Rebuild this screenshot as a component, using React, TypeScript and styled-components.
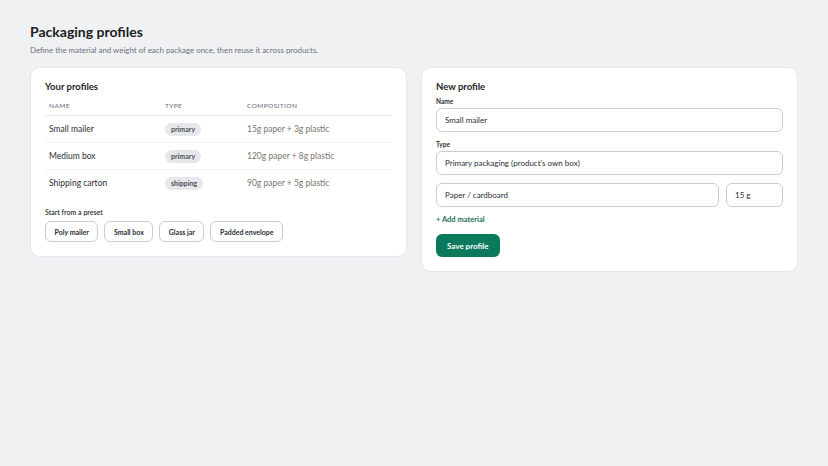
import React from 'react';
import styled, { createGlobalStyle } from 'styled-components';

const GlobalStyle = createGlobalStyle`
    body {
        margin: 0;
        background: #f0f1f3;
        font-family: Lato, 'Open Sans', sans-serif;
        color: #1f2328;
    }
`;

const Page = styled.div`
    padding: 22px 30px 30px;
    min-height: 466px;
    box-sizing: border-box;
`;

const Title = styled.h1`
    margin: 0;
    font-size: 14px;
    line-height: 20px;
    font-weight: 700;
    color: #1a1d21;
`;

const Subtitle = styled.p`
    margin: 2px 0 0;
    font-size: 7.9px;
    line-height: 12px;
    color: #6b7280;
`;

const Columns = styled.div`
    margin-top: 11px;
    display: grid;
    grid-template-columns: 1fr 1fr;
    gap: 14px;
    align-items: start;
`;

const Card = styled.section`
    background: #fff;
    border: 1px solid #e6e7ea;
    border-radius: 10px;
    padding: 13px 14px 14px;
`;

const CardTitle = styled.h2`
    margin: 0;
    font-size: 9.5px;
    line-height: 12px;
    font-weight: 700;
    color: #1f2328;
`;

const Table = styled.table`
    width: 100%;
    margin-top: 2px;
    border-collapse: collapse;
    table-layout: fixed;
`;

const Th = styled.th<{ $width?: number }>`
    text-align: left;
    font-size: 6.5px;
    font-weight: 500;
    letter-spacing: 0.4px;
    color: #6b7280;
    text-transform: uppercase;
    padding: 7px 4px 6px;
    box-sizing: border-box;
    width: ${({ $width }) => ($width ? `${$width}px` : 'auto')};
    border-bottom: 1px solid #e8e9ec;
`;

const Td = styled.td<{ $muted?: boolean }>`
    font-size: 8.5px;
    height: 26px;
    padding: 0 4px;
    color: ${({ $muted }) => ($muted ? '#7b746e' : '#2a2e33')};
    border-bottom: 1px solid #f0f1f3;
    tr:last-child & {
        border-bottom: none;
    }
`;

const Badge = styled.span`
    display: inline-block;
    background: #e6e7ea;
    color: #4b5058;
    border-radius: 8px;
    font-size: 7px;
    font-weight: 700;
    line-height: 13px;
    padding: 0 6px;
`;

const SectionLabel = styled.div`
    margin-top: 12px;
    font-size: 7px;
    font-weight: 600;
    color: #2a2e33;
`;

const PresetRow = styled.div`
    display: flex;
    gap: 6px;
    margin-top: 5px;
`;

const PresetButton = styled.button`
    font-family: inherit;
    font-size: 7px;
    font-weight: 700;
    color: #2a2e33;
    background: #fff;
    border: 1px solid #c9ccd1;
    border-radius: 6px;
    height: 21px;
    padding: 0 8.5px;
`;

const FieldLabel = styled.label`
    display: block;
    font-size: 6.5px;
    font-weight: 700;
    color: #2a2e33;
    margin: 5px 0 3px;
`;

const Input = styled.div<{ $grow?: boolean; $width?: number }>`
    box-sizing: border-box;
    height: 24px;
    display: flex;
    align-items: center;
    padding: 0 8px;
    border: 1px solid #c9ccd1;
    border-radius: 6px;
    font-size: 8px;
    color: #2a2e33;
    flex: ${({ $grow }) => ($grow ? 1 : 'none')};
    width: ${({ $width }) => ($width ? `${$width}px` : 'auto')};
`;

const Gap = styled.div`
    height: 4px;
`;

const MaterialRow = styled.div`
    display: flex;
    gap: 7px;
    margin-top: 8px;
`;

const AddLink = styled.div`
    margin-top: 8px;
    font-size: 7.5px;
    font-weight: 700;
    color: #1b6e5a;
`;

const SaveButton = styled.button`
    margin-top: 10px;
    font-family: inherit;
    font-size: 8px;
    font-weight: 700;
    color: #fff;
    background: #0b7a5c;
    border: none;
    border-radius: 6px;
    height: 23px;
    padding: 0 11px;
`;

const profiles = [
    { name: 'Small mailer', type: 'primary', composition: '15g paper + 3g plastic' },
    { name: 'Medium box', type: 'primary', composition: '120g paper + 8g plastic' },
    { name: 'Shipping carton', type: 'shipping', composition: '90g paper + 5g plastic' },
];

const presets = ['Poly mailer', 'Small box', 'Glass jar', 'Padded envelope'];

export default function App() {
    return (
        <Page>
            <GlobalStyle />
            <Title>Packaging profiles</Title>
            <Subtitle>Define the material and weight of each package once, then reuse it across products.</Subtitle>
            <Columns>
                <Card>
                    <CardTitle>Your profiles</CardTitle>
                    <Table>
                        <thead>
                            <tr>
                                <Th $width={116}>Name</Th>
                                <Th $width={82}>Type</Th>
                                <Th>Composition</Th>
                            </tr>
                        </thead>
                        <tbody>
                            {profiles.map((p) => (
                                <tr key={p.name}>
                                    <Td>{p.name}</Td>
                                    <Td>
                                        <Badge>{p.type}</Badge>
                                    </Td>
                                    <Td $muted>{p.composition}</Td>
                                </tr>
                            ))}
                        </tbody>
                    </Table>
                    <SectionLabel>Start from a preset</SectionLabel>
                    <PresetRow>
                        {presets.map((p) => (
                            <PresetButton key={p}>{p}</PresetButton>
                        ))}
                    </PresetRow>
                </Card>
                <Card>
                    <CardTitle>New profile</CardTitle>
                    <FieldLabel>Name</FieldLabel>
                    <Input>Small mailer</Input>
                    <Gap />
                    <FieldLabel>Type</FieldLabel>
                    <Input>Primary packaging (product’s own box)</Input>
                    <MaterialRow>
                        <Input $grow>Paper / cardboard</Input>
                        <Input $width={57}>15 g</Input>
                    </MaterialRow>
                    <AddLink>+ Add material</AddLink>
                    <SaveButton>Save profile</SaveButton>
                </Card>
            </Columns>
        </Page>
    );
}
